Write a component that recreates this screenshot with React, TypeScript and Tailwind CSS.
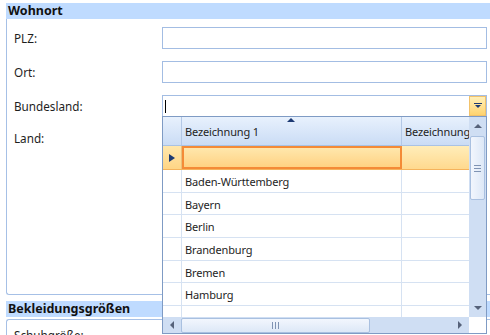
const rows = ['Baden-Württemberg', 'Bayern', 'Berlin', 'Brandenburg', 'Bremen', 'Hamburg', ''];

function Arrow({ dir }: { dir: 'up' | 'down' | 'left' | 'right' }) {
  const pts = {
    up: '0,5 4,1 8,5',
    down: '0,1 8,1 4,5',
    left: '5,0 5,8 1,4',
    right: '1,0 1,8 5,4',
  }[dir];
  const vertical = dir === 'up' || dir === 'down';
  return (
    <svg width={vertical ? 8 : 6} height={vertical ? 6 : 8} viewBox={vertical ? '0 0 8 6' : '0 0 6 8'}>
      <polygon points={pts} fill="#56627a" />
    </svg>
  );
}

function Field({ label, combo }: { label: string; combo?: boolean }) {
  return (
    <div className="flex h-[22px] items-center">
      <div className="w-[155px] pl-[7px] pt-px text-[11.7px] text-[#1e1e1e]">{label}</div>
      {combo ? (
        <div className="relative flex h-[22px] w-[325px] items-center border border-[#a3bde3] bg-white">
          <div className="ml-[2px] h-[13px] w-px bg-black" />
          <div className="absolute right-0 top-0 flex h-[20px] w-[17px] items-center justify-center border border-[#f2c26b] bg-gradient-to-b from-[#fff0b8] to-[#ffd36e]">
            <svg width="8" height="6" viewBox="0 0 8 6">
              <rect x="0" y="0" width="8" height="1" fill="#1d3a73" />
              <polygon points="1,2 7,2 4,5" fill="#1d3a73" />
            </svg>
          </div>
        </div>
      ) : (
        <div className="h-[22px] w-[325px] border border-[#a3bde3] bg-white" />
      )}
    </div>
  );
}

function Dropdown() {
  return (
    <div className="absolute left-[162px] top-[116px] flex h-[218px] w-[325px] flex-col border border-[#7f9bc4] bg-white text-[11px] tracking-[-0.15px] text-[#1e1e1e]">
      <div className="flex min-h-0 flex-1">
        <div className="flex min-w-0 flex-1 flex-col overflow-hidden">
          {/* header */}
          <div className="flex h-[29px] shrink-0 border-b border-[#a9c2e4] bg-gradient-to-b from-[#e8f1fd] to-[#cadcf5]">
            <div className="w-[19px] shrink-0 border-r border-[#b3c8e6]" />
            <div className="relative flex w-[220px] shrink-0 items-center border-r border-[#b3c8e6] pl-[3px] pt-[2px]">
              Bezeichnung 1
              <svg className="absolute left-[105px] top-[1px]" width="8" height="5" viewBox="0 0 8 5">
                <polygon points="0,4 4,0 8,4" fill="#1d3a73" />
              </svg>
            </div>
            <div className="flex items-center whitespace-nowrap pl-[3px] pt-[2px]">Bezeichnung</div>
          </div>
          {/* selected row */}
          <div className="flex h-[24px] shrink-0 border-b border-[#f5b35c]">
            <div className="flex w-[19px] shrink-0 items-center justify-center border-r border-[#e9c07a] bg-gradient-to-b from-[#ffe7ac] to-[#ffd585]">
              <svg width="6" height="8" viewBox="0 0 6 8">
                <polygon points="0,0 6,4 0,8" fill="#1d3a73" />
              </svg>
            </div>
            <div className="w-[220px] shrink-0 border-2 border-[#f48b37] bg-gradient-to-b from-[#ffe7ac] to-[#ffd282]" />
            <div className="flex-1 bg-gradient-to-b from-[#ffedb9] to-[#ffd98e]" />
          </div>
          {rows.map((r, i) => (
            <div key={i} className="flex h-[22.67px] shrink-0 border-b border-[#d6e2f2]">
              <div className="w-[19px] shrink-0 border-r border-[#d6e2f2]" />
              <div className="flex w-[220px] shrink-0 items-center border-r border-[#d6e2f2] pl-[3px] pt-[3px]">{r}</div>
              <div className="flex-1" />
            </div>
          ))}
        </div>
        {/* vertical scrollbar */}
        <div className="flex w-[17px] shrink-0 flex-col items-center bg-[#cfdef3]">
          <div className="flex h-[18px] items-center justify-center">
            <Arrow dir="up" />
          </div>
          <div className="mt-px flex h-[64px] w-[15px] items-center justify-center rounded-[2px] border border-[#a9c0e0] bg-gradient-to-r from-[#f2f6fd] to-[#dde8f7]">
            <div className="flex flex-col gap-[2px]">
              <div className="h-px w-[7px] bg-[#7f93b3]" />
              <div className="h-px w-[7px] bg-[#7f93b3]" />
              <div className="h-px w-[7px] bg-[#7f93b3]" />
            </div>
          </div>
          <div className="flex-1" />
          <div className="flex h-[18px] items-center justify-center">
            <Arrow dir="down" />
          </div>
        </div>
      </div>
      {/* horizontal scrollbar */}
      <div className="flex h-[16px] shrink-0">
        <div className="flex flex-1 items-center bg-[#cfdef3]">
          <div className="flex w-[18px] justify-center">
            <Arrow dir="left" />
          </div>
          <div className="flex h-[15px] w-[189px] items-center justify-center rounded-[2px] border border-[#a9c0e0] bg-gradient-to-b from-[#f2f6fd] to-[#dde8f7]">
            <div className="flex gap-[2px]">
              <div className="h-[7px] w-px bg-[#7f93b3]" />
              <div className="h-[7px] w-px bg-[#7f93b3]" />
              <div className="h-[7px] w-px bg-[#7f93b3]" />
            </div>
          </div>
          <div className="flex-1" />
          <div className="flex w-[18px] justify-center">
            <Arrow dir="right" />
          </div>
        </div>
        <div className="w-[17px] bg-white" />
      </div>
    </div>
  );
}

export default function App() {
  return (
    <div className="relative h-[335px] w-[490px] overflow-hidden bg-white font-['Segoe_UI','Noto_Sans',sans-serif]">
      <div className="pl-[6px] pt-[3px]">
        <div className="flex h-[16px] items-center bg-[#bfdbff] pl-[2px] text-[12.5px] font-bold leading-none text-[#111]">
          Wohnort
        </div>
        <div className="flex h-[276px] flex-col gap-[12px] rounded-bl-[3px] border-b border-l border-[#a6c0e6] pt-[8px]">
          <Field label="PLZ:" />
          <Field label="Ort:" />
          <Field label="Bundesland:" combo />
          <div className="pl-[7px] pt-px text-[11.7px] text-[#1e1e1e]">Land:</div>
        </div>
        <div className="mt-[6px] flex h-[16px] items-center bg-[#bfdbff] pl-[2px] text-[12.5px] font-bold leading-none text-[#111]">
          Bekleidungsgrößen
        </div>
        <div className="mt-[2px] h-[30px] rounded-tl-[3px] border-l border-t border-[#a6c0e6] pl-[7px] pt-[7px] text-[11.7px] text-[#1e1e1e]">
          Schuhgröße:
        </div>
      </div>
      <Dropdown />
    </div>
  );
}
